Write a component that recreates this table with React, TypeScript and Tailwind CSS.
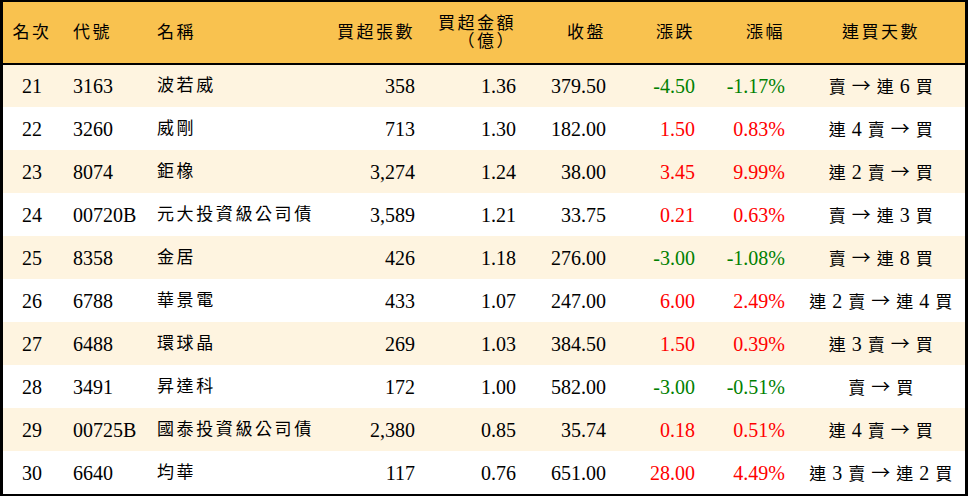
const rows = [
  { rank: 21, code: "3163", name: "波若威", vol: "358", amt: "1.36", close: "379.50", chg: "-4.50", pct: "-1.17%", streak: "賣 → 連 6 買" },
  { rank: 22, code: "3260", name: "威剛", vol: "713", amt: "1.30", close: "182.00", chg: "1.50", pct: "0.83%", streak: "連 4 賣 → 買" },
  { rank: 23, code: "8074", name: "鉅橡", vol: "3,274", amt: "1.24", close: "38.00", chg: "3.45", pct: "9.99%", streak: "連 2 賣 → 買" },
  { rank: 24, code: "00720B", name: "元大投資級公司債", vol: "3,589", amt: "1.21", close: "33.75", chg: "0.21", pct: "0.63%", streak: "賣 → 連 3 買" },
  { rank: 25, code: "8358", name: "金居", vol: "426", amt: "1.18", close: "276.00", chg: "-3.00", pct: "-1.08%", streak: "賣 → 連 8 買" },
  { rank: 26, code: "6788", name: "華景電", vol: "433", amt: "1.07", close: "247.00", chg: "6.00", pct: "2.49%", streak: "連 2 賣 → 連 4 買" },
  { rank: 27, code: "6488", name: "環球晶", vol: "269", amt: "1.03", close: "384.50", chg: "1.50", pct: "0.39%", streak: "連 3 賣 → 買" },
  { rank: 28, code: "3491", name: "昇達科", vol: "172", amt: "1.00", close: "582.00", chg: "-3.00", pct: "-0.51%", streak: "賣 → 買" },
  { rank: 29, code: "00725B", name: "國泰投資級公司債", vol: "2,380", amt: "0.85", close: "35.74", chg: "0.18", pct: "0.51%", streak: "連 4 賣 → 買" },
  { rank: 30, code: "6640", name: "均華", vol: "117", amt: "0.76", close: "651.00", chg: "28.00", pct: "4.49%", streak: "連 3 賣 → 連 2 買" },
];

// CJK glyphs a bit smaller than the latin ones, like the reference's kai face
function Streak({ text }: { text: string }) {
  return (
    <>
      {text.split(" ").map((tok, i) => {
        let cls = "text-[17px]";
        if (tok === "→") cls = "text-[19px] font-['Noto_Sans_CJK_TC',sans-serif]";
        else if (/[0-9]/.test(tok)) cls = "";
        return (
          <span key={i}>
            {i > 0 && " "}
            <span className={cls}>{tok}</span>
          </span>
        );
      })}
    </>
  );
}

export default function App() {
  return (
    <div className="w-[968px] h-[496px] bg-white border-black border-x-[3px] border-y-2 text-[20px] text-black font-['Liberation_Serif','Noto_Sans_CJK_TC',serif]">
      <table className="w-full table-fixed border-collapse">
        <colgroup>
          <col className="w-[58px]" />
          <col className="w-[84px]" />
          <col className="w-[175px]" />
          <col className="w-[107px]" />
          <col className="w-[101px]" />
          <col className="w-[90px]" />
          <col className="w-[89px]" />
          <col className="w-[90px]" />
          <col />
        </colgroup>
        <thead>
          <tr className="h-[62px] bg-[#f9c24f] border-b-2 border-black text-[17px] tracking-[2.5px]">
            <th className="font-normal text-center">名次</th>
            <th className="font-normal text-left pl-3">代號</th>
            <th className="font-normal text-left pl-3">名稱</th>
            <th className="font-normal text-right pr-3">買超張數</th>
            <th className="font-normal text-right pr-3 leading-[18px]">
              買超金額
              <br />
              （億）
            </th>
            <th className="font-normal text-right pr-3">收盤</th>
            <th className="font-normal text-right pr-3">漲跌</th>
            <th className="font-normal text-right pr-3">漲幅</th>
            <th className="font-normal text-center">連買天數</th>
          </tr>
        </thead>
        <tbody>
          {rows.map((r, i) => {
            const color = r.chg.startsWith("-") ? "text-[#008000]" : "text-[#ff0000]";
            return (
              <tr key={r.rank} className={`h-[43px] ${i % 2 === 0 ? "bg-[#fef4e0]" : "bg-white"}`}>
                <td className="text-center">{r.rank}</td>
                <td className="pl-3">{r.code}</td>
                <td className="pl-3 text-[17px] tracking-[2.6px] whitespace-nowrap">{r.name}</td>
                <td className="text-right pr-3">{r.vol}</td>
                <td className="text-right pr-3">{r.amt}</td>
                <td className="text-right pr-3">{r.close}</td>
                <td className={`text-right pr-3 ${color}`}>{r.chg}</td>
                <td className={`text-right pr-3 ${color}`}>{r.pct}</td>
                <td className="text-center whitespace-nowrap tracking-[0.5px]">
                  <Streak text={r.streak} />
                </td>
              </tr>
            );
          })}
        </tbody>
      </table>
    </div>
  );
}
